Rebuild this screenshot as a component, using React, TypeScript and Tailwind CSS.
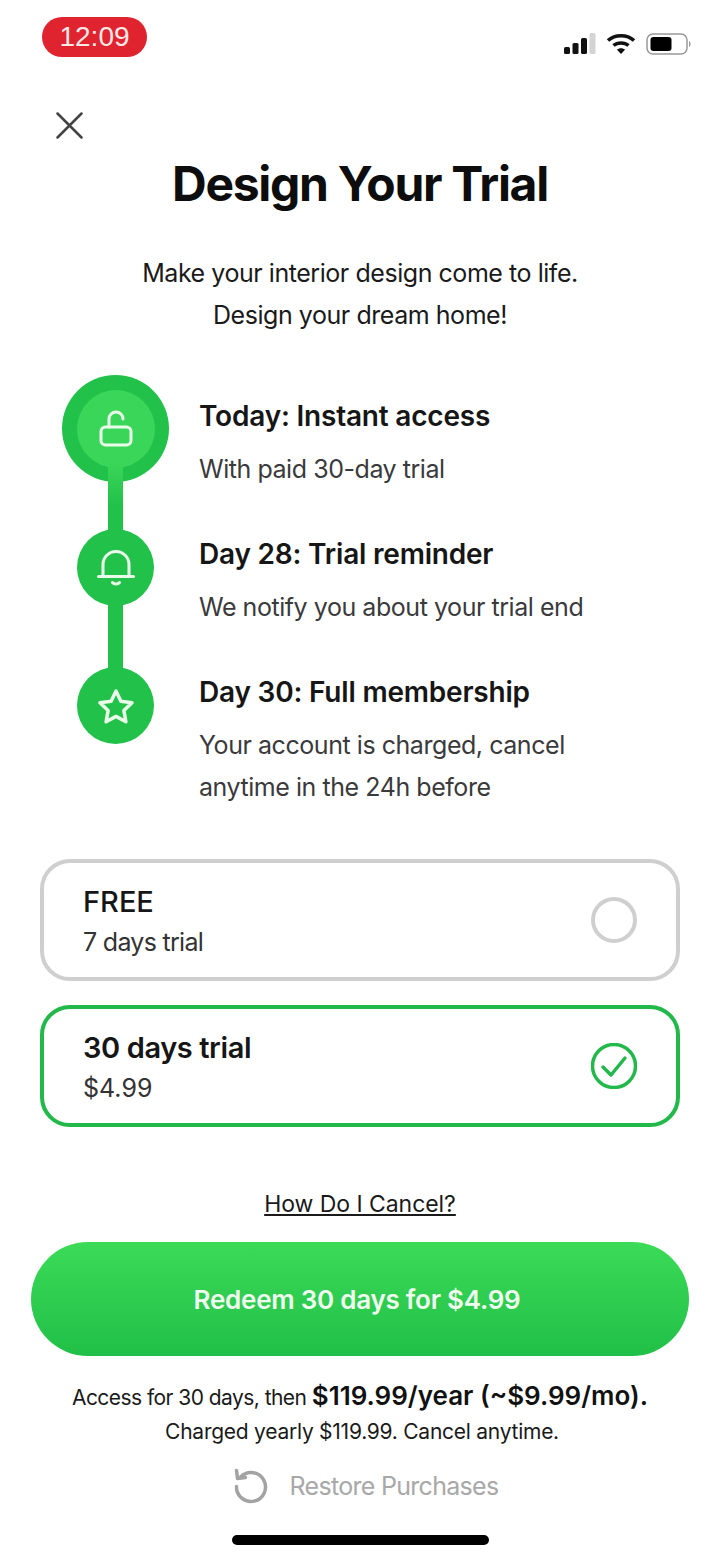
import React from "react";

const steps = [
  { title: "Today: Instant access", lines: ["With paid 30-day trial"] },
  { title: "Day 28: Trial reminder", lines: ["We notify you about your trial end"] },
  { title: "Day 30: Full membership", lines: ["Your account is charged, cancel", "anytime in the 24h before"] },
];

const UnlockIcon = () => (
  <svg width="36" height="38" viewBox="0 0 36 38" fill="none" stroke="#e9fbe9" strokeWidth="3" strokeLinecap="round">
    <rect x="3" y="17" width="30" height="18" rx="4.5" />
    <path d="M11 17V9a7 7 0 0 1 14 0" />
  </svg>
);

const BellIcon = () => (
  <svg width="38" height="38" viewBox="0 0 38 38" fill="none" stroke="#e9fbe9" strokeWidth="3" strokeLinecap="round">
    <path d="M6 27V15.500a13 13 0 0 1 26 0V27" />
    <path d="M1.500 27.500h35" />
    <path d="M15.500 33.500c1.500 2 5.500 2 7 0" />
  </svg>
);

const StarIcon = () => (
  <svg width="38" height="36" viewBox="0 0 38 36" fill="none" stroke="#e9fbe9" strokeWidth="3.500" strokeLinejoin="round">
    <path d="M19 3l4.900 10.300 11.100 1.500-8.100 7.800 2 11.200L19 28.400 9.100 33.800l2-11.200L3 14.800l11.100-1.500z" />
  </svg>
);

const App = () => {
  return (
    <div className="w-[720px] h-[1560px] bg-white overflow-hidden flex flex-col text-[#1a1a1a] font-['Inter','Liberation_Sans',sans-serif]">
      {/* Status bar */}
      <div className="h-[62px] pl-[42px] pr-[28px] pt-[17px] flex justify-between items-start shrink-0">
        <div className="w-[105px] h-[40px] rounded-full bg-[#e0242f] text-[#fde8e8] text-[28px] leading-[40px] text-center font-['Liberation_Sans',sans-serif]">
          12:09
        </div>
        <div className="flex items-center mt-[16px]">
          <svg width="33" height="22" viewBox="0 0 33 22">
            <rect x="0" y="14" width="6" height="7" rx="1.500" fill="#111" />
            <rect x="8.500" y="10" width="6" height="11" rx="1.500" fill="#111" />
            <rect x="17" y="5" width="6" height="16" rx="1.500" fill="#111" />
            <rect x="25.500" y="0" width="6" height="21" rx="1.500" fill="#d4d4d4" />
          </svg>
          <svg className="ml-[9px]" width="30" height="22" viewBox="0 0 30 22" fill="none" stroke="#111" strokeWidth="3.500">
            <path d="M2 7.500c7-6.500 19-6.500 26 0" />
            <path d="M7.500 12.500c4-3.500 11-3.500 15 0" />
            <path d="M15 21l-4-4.200c2-2 6-2 8 0z" fill="#111" stroke="none" />
          </svg>
          <svg className="ml-[10px]" width="46" height="22" viewBox="0 0 46 22">
            <rect x="1" y="1" width="40" height="20" rx="6" fill="none" stroke="#999" strokeWidth="1.500" />
            <rect x="4.500" y="4" width="21" height="14" rx="3" fill="#000" />
            <path d="M43 8c2 1 2 5 0 6z" fill="#999" />
          </svg>
        </div>
      </div>

      {/* Close */}
      <div className="h-[46px] pl-[56px] pt-[50px] shrink-0">
        <svg width="27" height="27" viewBox="0 0 27 27" fill="none" stroke="#444" strokeWidth="2.500" strokeLinecap="round">
          <path d="M1.500 1.500l24 24M25.500 1.500l-24 24" />
        </svg>
      </div>

      <h1 className="mt-[42px] h-[60px] shrink-0 text-center text-[48px] leading-[60px] font-bold tracking-[-1.3px] text-[#0d0d0d]">
        Design Your Trial
      </h1>

      <div className="mt-[38px] text-center text-[25px] leading-[42px] tracking-[-0.45px]">
        <p>Make your interior design come to life.</p>
        <p>Design your dream home!</p>
      </div>

      {/* Timeline */}
      <div className="mt-[39px] pl-[62px] flex shrink-0">
        <div className="w-[107px] flex flex-col items-center shrink-0">
          <div className="w-[107px] h-[107px] rounded-full bg-[#22c24a] flex items-center justify-center shrink-0">
            <div className="w-[78px] h-[78px] rounded-full bg-[#3ad659] flex items-center justify-center">
              <UnlockIcon />
            </div>
          </div>
          <div className="relative w-[15px] h-[67px] -mt-[18px] -mb-[2px] shrink-0 bg-gradient-to-b from-[#3ad659] to-[#22c24a] to-60%" />
          <div className="w-[77px] h-[77px] rounded-full bg-[#22c24a] flex items-center justify-center shrink-0">
            <BellIcon />
          </div>
          <div className="w-[15px] h-[65px] -my-[2px] bg-[#22c24a] shrink-0" />
          <div className="w-[77px] h-[77px] rounded-full bg-[#22c24a] flex items-center justify-center shrink-0">
            <StarIcon />
          </div>
        </div>
        <div className="ml-[30px] flex flex-col gap-[43px] pt-[20px]">
          {steps.map((step) => (
            <div key={step.title}>
              <div className="text-[28px] leading-[42px] font-semibold tracking-[-0.2px] text-[#161616]">{step.title}</div>
              <div className="mt-[11px] text-[25px] leading-[42px] tracking-[-0.45px] text-[#3a3a3c]">
                {step.lines.map((line) => (
                  <div key={line}>{line}</div>
                ))}
              </div>
            </div>
          ))}
        </div>
      </div>

      {/* Plans */}
      <div className="mt-[51px] px-[40px] flex flex-col gap-[24px]">
        <div className="h-[122px] rounded-[30px] border-[4px] border-[#cfcfcf] pl-[39px] pr-[39px] flex items-center justify-between">
          <div className="pt-[4px]">
            <div className="text-[29px] leading-[40px] font-medium text-[#161616]">FREE</div>
            <div className="text-[25px] leading-[40px] tracking-[-0.7px] text-[#333]">7 days trial</div>
          </div>
          <div className="w-[46px] h-[46px] rounded-full border-[4px] border-[#cfcfcf]" />
        </div>
        <div className="h-[122px] rounded-[30px] border-[4px] border-[#22b84a] pl-[39px] pr-[39px] flex items-center justify-between">
          <div className="pt-[4px]">
            <div className="text-[29px] leading-[40px] font-semibold tracking-[-0.4px] text-[#161616]">30 days trial</div>
            <div className="text-[25px] leading-[40px] text-[#333]">$4.99</div>
          </div>
          <svg width="46" height="46" viewBox="0 0 46 46" fill="none" stroke="#22b84a" strokeWidth="3.500" strokeLinecap="round" strokeLinejoin="round">
            <circle cx="23" cy="23" r="21.500" />
            <path d="M12 24l8 8 14-17" />
          </svg>
        </div>
      </div>

      <a className="mt-[61px] text-center text-[23px] leading-[32px] underline text-[#1a1a1a] tracking-[-0.05px]">How Do I Cancel?</a>

      <button className="mt-[22px] mx-[31px] h-[114px] shrink-0 rounded-full bg-gradient-to-b from-[#3bdb58] to-[#20bf47] text-[#effcef] text-[26px] font-semibold tracking-[-0.25px] pr-[6px]">
        Redeem 30 days for $4.99
      </button>

      <p className="mt-[23px] text-center text-[21px] leading-[34px] tracking-[-0.55px] text-[#1a1a1a]">
        Access for 30 days, then{" "}
        <span className="text-[26px] font-semibold tracking-[0px] text-[#111]">$119.99/year (~$9.99/mo).</span>
      </p>
      <p className="pl-[4px] text-center text-[21px] leading-[34px] tracking-[-0.25px] text-[#1a1a1a]">Charged yearly $119.99. Cancel anytime.</p>

      <div className="mt-[17px] pl-[12px] flex items-center justify-center gap-[22px] h-[40px] shrink-0 text-[#a8a8a8]">
        <svg width="34" height="36" viewBox="0 0 34 36" fill="none" stroke="#a3a3a3" strokeWidth="3.500" strokeLinecap="round" strokeLinejoin="round">
          <path d="M7 8.500a14.500 14.500 0 1 1-4.500 10" />
          <path d="M2.500 2.500l1 8 8-1" />
        </svg>
        <span className="text-[25px] leading-[40px] tracking-[-0.7px]">Restore Purchases</span>
      </div>

      <div className="mt-[29px] mx-auto w-[257px] h-[10px] rounded-full bg-black shrink-0" />
    </div>
  );
};

export default App;
